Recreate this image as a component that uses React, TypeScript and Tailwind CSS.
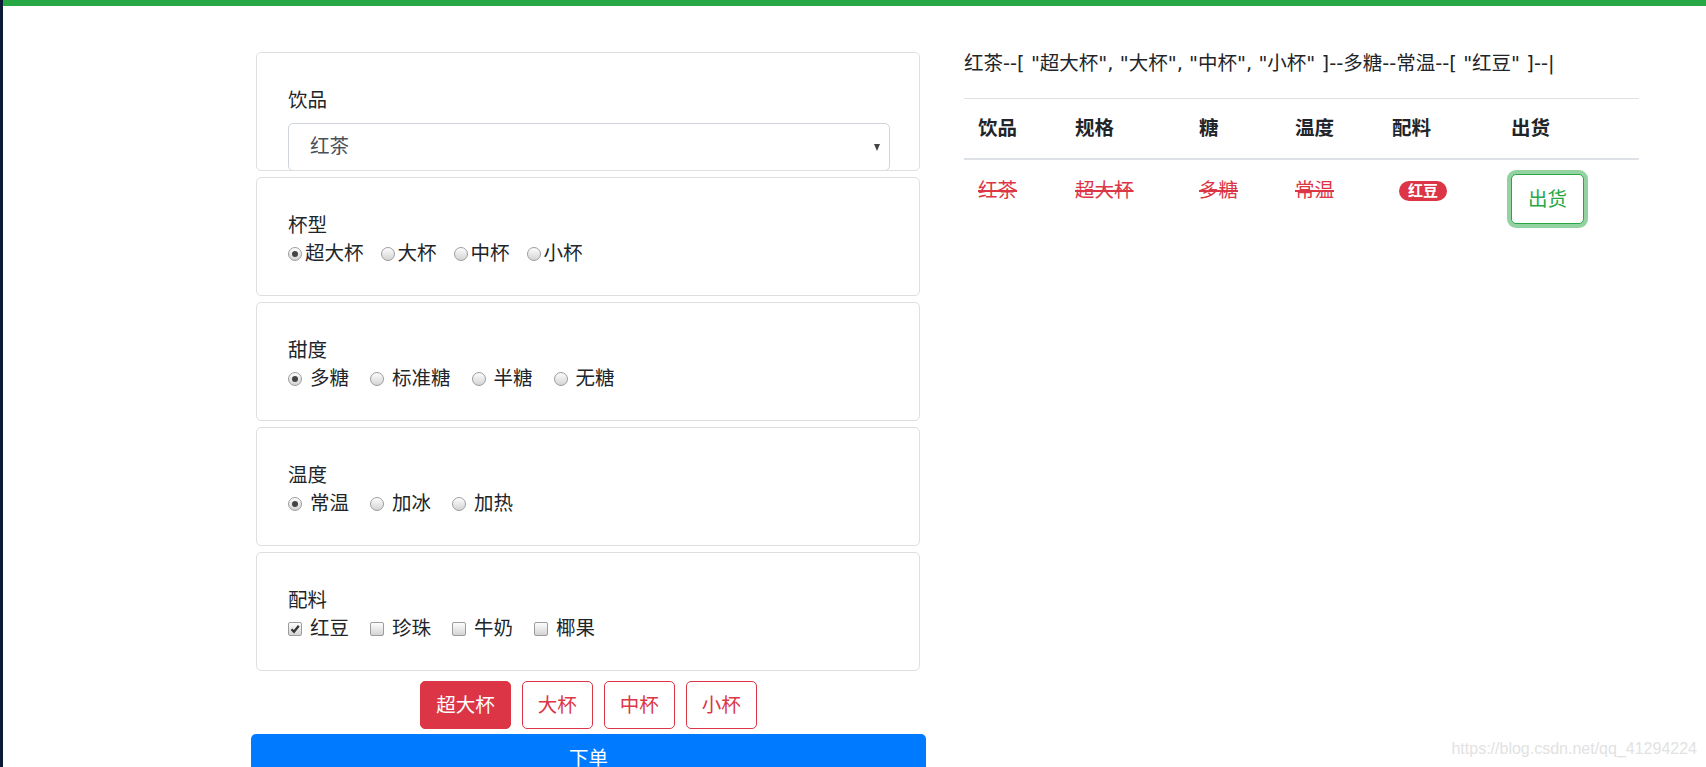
import { useState } from "react";

const FONT = { fontFamily: '"Liberation Sans", "Noto Sans CJK SC", sans-serif' };
const WIDE = { fontFamily: '"DejaVu Sans", "Noto Sans CJK SC", sans-serif' };

const DRINKS = ["红茶", "绿茶", "奶茶"];
const SIZES = ["超大杯", "大杯", "中杯", "小杯"];
const SUGARS = ["多糖", "标准糖", "半糖", "无糖"];
const TEMPS = ["常温", "加冰", "加热"];
const TOPPINGS = ["红豆", "珍珠", "牛奶", "椰果"];

// old-chrome style radio dot
const Radio = ({ checked }: { checked: boolean }) => (
  <span className="w-[14px] h-[14px] rounded-full border border-[#9c9c9c] bg-gradient-to-b from-[#fdfdfd] to-[#d4d4d4] flex items-center justify-center shrink-0">
    {checked && <span className="w-[6px] h-[6px] rounded-full bg-[#444]" />}
  </span>
);

const Check = ({ checked }: { checked: boolean }) => (
  <span className="w-[14px] h-[14px] rounded-[2px] border border-[#9c9c9c] bg-gradient-to-b from-[#fdfdfd] to-[#d4d4d4] flex items-center justify-center shrink-0">
    {checked && (
      <svg width="10" height="10" viewBox="0 0 10 10">
        <path d="M1.5 5.2 L4 7.8 L8.8 1.8" fill="none" stroke="#333" strokeWidth="2.2" />
      </svg>
    )}
  </span>
);

const Card = ({ children }: { children: React.ReactNode }) => (
  <div className="h-[119px] border border-[#dfdfdf] rounded-[5px] pl-[31px] pr-[29px] pt-[33px] overflow-hidden bg-white">
    {children}
  </div>
);

const Struck = ({ children }: { children: React.ReactNode }) => (
  <span className="text-[#dc3545] line-through decoration-2 decoration-[#dc3545]">{children}</span>
);

export default function App() {
  const [drink, setDrink] = useState("红茶");
  const [size, setSize] = useState("超大杯");
  const [sugar, setSugar] = useState("多糖");
  const [temp, setTemp] = useState("常温");
  const [tops, setTops] = useState<string[]>(["红豆"]);

  const toggleTop = (t: string) =>
    setTops((prev) => (prev.includes(t) ? prev.filter((x) => x !== t) : [...prev, t]));

  const summary = `${drink}--[ ${SIZES.map((s) => `"${s}"`).join(", ")} ]--${sugar}--${temp}--[ ${tops
    .map((t) => `"${t}"`)
    .join(", ")} ]--|`;

  return (
    <div className="relative h-[767px] overflow-hidden flex bg-white text-[#212529] text-[19.5px]" style={FONT}>
      <div className="w-[3px] bg-[#0c1a36] shrink-0" />
      <div className="flex-1 flex flex-col">
        <div className="h-[6px] shrink-0 bg-[#28a745]" />
        <div className="flex items-start shrink-0">
          {/* left: order form */}
          <div className="ml-[248px] w-[675px] mt-[46px]">
            <div className="ml-[5px] mr-[6px] flex flex-col gap-[6px]">
              <Card>
                <div className="leading-[28px]">饮品</div>
                <div className="relative mt-[9px]">
                  <select
                    value={drink}
                    onChange={(e) => setDrink(e.target.value)}
                    className="appearance-none w-full h-[48px] border border-[#ced4da] rounded-[5px] pl-[21px] text-[#495057] bg-white outline-none"
                    style={FONT}
                  >
                    {DRINKS.map((d) => (
                      <option key={d}>{d}</option>
                    ))}
                  </select>
                  <span className="absolute right-[10px] top-[21px] w-0 h-0 border-l-[3.5px] border-r-[3.5px] border-t-[7px] border-l-transparent border-r-transparent border-t-[#444] pointer-events-none" />
                </div>
              </Card>

              <Card>
                <div className="leading-[28px]">杯型</div>
                <div className="flex items-center leading-[29px]">
                  {SIZES.map((s) => (
                    <label key={s} className="flex items-center mr-[17px] cursor-pointer" onClick={() => setSize(s)}>
                      <Radio checked={size === s} />
                      <span className="ml-[3px]">{s}</span>
                    </label>
                  ))}
                </div>
              </Card>

              <Card>
                <div className="leading-[28px]">甜度</div>
                <div className="flex items-center leading-[29px]">
                  {SUGARS.map((s) => (
                    <label key={s} className="flex items-center mr-[21px] cursor-pointer" onClick={() => setSugar(s)}>
                      <Radio checked={sugar === s} />
                      <span className="ml-[8px]">{s}</span>
                    </label>
                  ))}
                </div>
              </Card>

              <Card>
                <div className="leading-[28px]">温度</div>
                <div className="flex items-center leading-[29px]">
                  {TEMPS.map((s) => (
                    <label key={s} className="flex items-center mr-[21px] cursor-pointer" onClick={() => setTemp(s)}>
                      <Radio checked={temp === s} />
                      <span className="ml-[8px]">{s}</span>
                    </label>
                  ))}
                </div>
              </Card>

              <Card>
                <div className="leading-[28px]">配料</div>
                <div className="flex items-center leading-[29px]">
                  {TOPPINGS.map((s) => (
                    <label key={s} className="flex items-center mr-[21px] cursor-pointer" onClick={() => toggleTop(s)}>
                      <Check checked={tops.includes(s)} />
                      <span className="ml-[8px]">{s}</span>
                    </label>
                  ))}
                </div>
              </Card>
            </div>

            <div className="mt-[10px] flex justify-center gap-[11px]">
              {SIZES.map((s) =>
                s === size ? (
                  <button
                    key={s}
                    onClick={() => setSize(s)}
                    className="h-[48px] px-[15px] rounded-[5px] border border-[#dc3545] bg-[#dc3545] text-white leading-[29px]"
                  >
                    {s}
                  </button>
                ) : (
                  <button
                    key={s}
                    onClick={() => setSize(s)}
                    className="h-[48px] px-[15px] rounded-[5px] border border-[#dc3545] bg-white text-[#dc3545] leading-[29px]"
                  >
                    {s}
                  </button>
                )
              )}
            </div>

            <button className="mt-[5px] w-full h-[48px] rounded-[5px] bg-[#007bff] text-white leading-[29px]">下单</button>
          </div>

          {/* right: order list */}
          <div className="ml-[38px] w-[675px] pt-[43px]">
            <div className="leading-[29px] whitespace-nowrap" style={WIDE}>
              {summary}
            </div>
            <table className="mt-[20px] w-full table-fixed border-collapse">
              <colgroup>
                <col className="w-[97px]" />
                <col className="w-[124px]" />
                <col className="w-[96px]" />
                <col className="w-[97px]" />
                <col className="w-[119px]" />
                <col className="w-[142px]" />
              </colgroup>
              <thead>
                <tr className="border-t border-[#dee2e6] border-b-2">
                  {["饮品", "规格", "糖", "温度", "配料", "出货"].map((h) => (
                    <th key={h} className="text-left font-bold px-[14px] py-[15px] leading-[29px] align-bottom">
                      {h}
                    </th>
                  ))}
                </tr>
              </thead>
              <tbody>
                <tr>
                  <td className="px-[14px] pt-[16px] pb-[15px] leading-[29px] align-top">
                    <Struck>{drink}</Struck>
                  </td>
                  <td className="px-[14px] pt-[16px] pb-[15px] leading-[29px] align-top">
                    <Struck>{size}</Struck>
                  </td>
                  <td className="px-[14px] pt-[16px] pb-[15px] leading-[29px] align-top">
                    <Struck>{sugar}</Struck>
                  </td>
                  <td className="px-[14px] pt-[16px] pb-[15px] leading-[29px] align-top">
                    <Struck>{temp}</Struck>
                  </td>
                  <td className="px-[14px] pt-[16px] pb-[15px] leading-[29px] align-top">
                    <div className="flex h-[29px] items-center">
                      {tops.map((t) => (
                        <span
                          key={t}
                          className="ml-[7px] inline-flex items-center h-[20px] px-[9px] rounded-full bg-[#dc3545] text-white text-[15px] font-bold leading-none"
                        >
                          {t}
                        </span>
                      ))}
                    </div>
                  </td>
                  <td className="px-[14px] pt-[14px] align-top">
                    <button className="w-[73px] h-[50px] rounded-[5px] border border-[#28a745] bg-white text-[#28a745] shadow-[0_0_0_4px_rgba(40,167,69,0.5)] leading-[29px]">
                      出货
                    </button>
                  </td>
                </tr>
              </tbody>
            </table>
          </div>
        </div>
      </div>
      <div className="absolute right-[9px] bottom-[8px] text-[16px] text-[#e2e2e2] leading-[20px] pointer-events-none">
        https://blog.csdn.net/qq_41294224
      </div>
    </div>
  );
}
